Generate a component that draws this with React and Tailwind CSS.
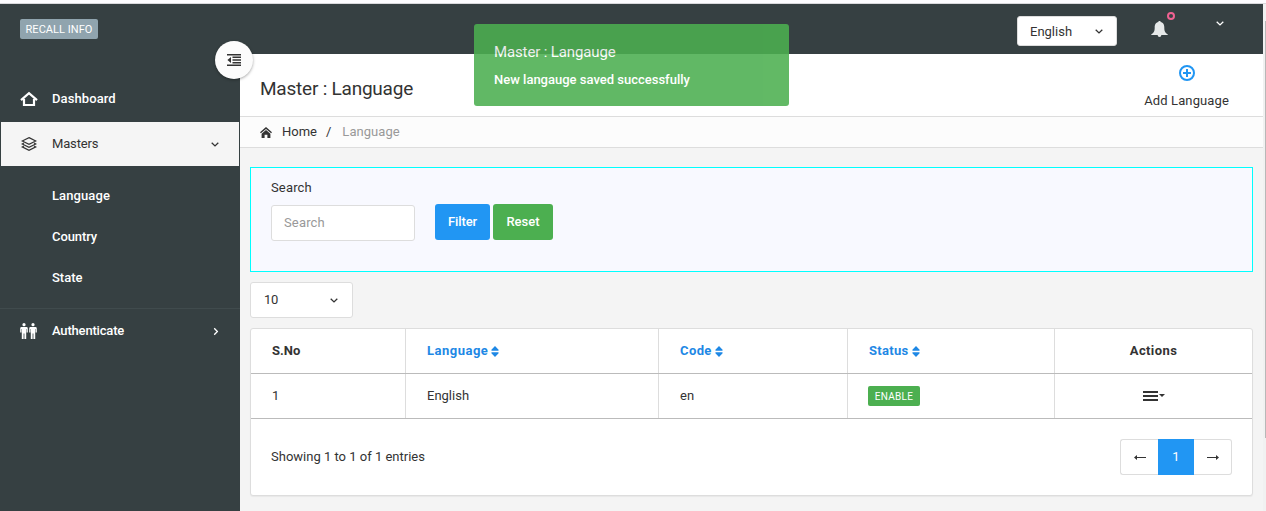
import React from "react";

const Chevron = ({ className = "" }) => (
  <svg className={className} width="8" height="5" viewBox="0 0 8 5" fill="none" stroke="currentColor" strokeWidth="1.3">
    <path d="M0.7 0.7L4 3.9L7.3 0.7" />
  </svg>
);

const HomeOutline = () => (
  <svg width="18" height="16" viewBox="0 0 18 16" fill="none" stroke="currentColor" strokeWidth="2.2">
    <path d="M1 9.2L9 2.2L17 9.2" />
    <path d="M4 8V14H14V8" />
  </svg>
);

const Layers = () => (
  <svg width="16" height="16" viewBox="0 0 16 16" fill="none" stroke="currentColor" strokeWidth="1.2">
    <path d="M8 1.6L14.8 5L8 8.4L1.2 5Z" />
    <path d="M3 7L1.2 8L8 11.4L14.8 8L13 7" />
    <path d="M3 9.9L1.2 10.9L8 14.3L14.8 10.9L13 9.9" />
  </svg>
);

const People = () => (
  <svg width="18" height="16" viewBox="0 0 18 16" fill="currentColor">
    {[0, 9].map((x) => (
      <g key={x} transform={`translate(${x} 0)`}>
        <circle cx="4" cy="1.7" r="1.6" />
        <path d="M1.6 4H6.4Q7.8 4 7.8 5.4V9.5H6.6V6H6.2V16H4.4V10.5H3.6V16H1.8V6H1.4V9.5H0.2V5.4Q0.2 4 1.6 4Z" />
      </g>
    ))}
  </svg>
);

const HomeSolid = () => (
  <svg width="12" height="11" viewBox="0 0 12 11" fill="currentColor">
    <path d="M6 0L12 5.3L11.1 6.3L6 1.9L0.9 6.3L0 5.3Z" />
    <path d="M6 3L10.4 6.8V11H7.4V7.8H4.6V11H1.6V6.8Z" />
  </svg>
);

const Outdent = () => (
  <svg width="14" height="12" viewBox="0 0 14 12" fill="currentColor">
    <path d="M0 0H14V1.4H0ZM5.5 2.6H14V4H5.5ZM5.5 5.3H14V6.7H5.5ZM5.5 8H14V9.4H5.5ZM0 10.6H14V12H0ZM4 3V9L0.4 6Z" />
  </svg>
);

const Bell = () => (
  <svg width="17" height="16" viewBox="0 0 17 16" fill="currentColor">
    <path d="M7.5 1V0H9.5V1C12.5 1.6 13.3 4 13.3 6.4C13.3 10.4 14.2 11.6 16.8 13.4V14H10.4Q10.2 16 8.5 16Q6.8 16 6.6 14H0.2V13.4C2.8 11.6 3.7 10.4 3.7 6.4C3.7 4 4.5 1.6 7.5 1Z" />
  </svg>
);

const PlusCircle = () => (
  <svg width="16" height="16" viewBox="0 0 16 16" fill="none" stroke="currentColor" strokeWidth="2">
    <circle cx="8" cy="8" r="7" />
    <path d="M8 4V12M4 8H12" />
  </svg>
);

const Sort = () => (
  <svg width="8" height="11" viewBox="0 0 8 11" fill="currentColor">
    <path d="M4 0L7.6 3.7Q8 4.8 7 4.8H1Q0 4.8 0.4 3.7ZM4 11L7.6 7.3Q8 6.2 7 6.2H1Q0 6.2 0.4 7.3Z" />
  </svg>
);

const Arrow = ({ flip = false }) => (
  <svg className={flip ? "rotate-180" : ""} width="12" height="5" viewBox="0 0 12 5" fill="currentColor">
    <path d="M0 2.5L3 0V2H12V3H3V5Z" />
  </svg>
);

function Sidebar() {
  return (
    <aside className="flex w-60 shrink-0 flex-col bg-[#364042] font-medium text-white">
      <div className="flex h-[72px] items-start pl-5 pt-[15px]">
        <span className="flex h-5 w-[78px] items-center justify-center rounded-[2px] bg-[#90a4ae] pt-px text-[11px] font-normal tracking-[0.05px]">
          RECALL INFO
        </span>
      </div>
      <nav className="flex flex-col">
        <a className="flex h-[46px] items-center pl-5">
          <HomeOutline />
          <span className="ml-3.5 tracking-[0.1px]">Dashboard</span>
        </a>
        <a className="mx-px flex h-11 items-center bg-[#f5f5f5] pl-5 pr-5 font-normal text-[#333]">
          <Layers />
          <span className="ml-[15px] flex-1 tracking-[-0.15px]">Masters</span>
          <Chevron />
        </a>
        <div className="flex flex-col pb-[12px] pl-[52px] pt-[9px]">
          <a className="flex h-[41px] items-center tracking-[0.1px]">Language</a>
          <a className="flex h-[41px] items-center tracking-[-0.1px]">Country</a>
          <a className="flex h-[41px] items-center">State</a>
        </div>
        <div className="mt-[-2px] h-px bg-[#404b4d]" />
        <a className="flex h-[44px] items-center pl-5 pr-5">
          <People />
          <span className="ml-3.5 flex-1 tracking-[-0.18px]">Authenticate</span>
          <Chevron className="-rotate-90" />
        </a>
      </nav>
    </aside>
  );
}

const columns = "grid grid-cols-[154px_253px_189px_207px_1fr]";
const cell = "flex items-center border-l border-[#ddd] pl-[21px]";

function LanguageTable() {
  return (
    <section className="mt-2.5 flex h-[168px] flex-col rounded-[3px] border border-[#ddd] bg-white shadow-[0_1px_1px_rgba(0,0,0,0.05)]">
      <div className={columns + " h-[45px] border-b border-[#bbb] font-bold"}>
        <div className="flex items-center pl-[21px]">S.No</div>
        <div className={cell + " gap-[3px] text-[#1e88e5]"}>
          <span className="tracking-[0.5px]">Language</span>
          <Sort />
        </div>
        <div className={cell + " gap-[3px] text-[#1e88e5]"}>
          <span className="tracking-[0.4px]">Code</span>
          <Sort />
        </div>
        <div className={cell + " gap-[3px] text-[#1e88e5]"}>
          <span className="tracking-[0.3px]">Status</span>
          <Sort />
        </div>
        <div className="flex items-center justify-center border-l border-[#ddd] tracking-[0.4px]">Actions</div>
      </div>
      <div className={columns + " h-[45px] border-b border-[#bbb]"}>
        <div className="flex items-center pl-[21px]">1</div>
        <div className={cell}>English</div>
        <div className={cell}>en</div>
        <div className="flex items-center border-l border-[#ddd] pl-5">
          <span className="flex h-5 w-[52px] items-center justify-center rounded-[2px] bg-[#4caf50] pt-px text-[10px] tracking-[0.3px] text-white">
            ENABLE
          </span>
        </div>
        <div className="flex items-center justify-center gap-px border-l border-[#ddd] pb-px">
          <svg width="15" height="10" viewBox="0 0 15 10" fill="currentColor">
            <path d="M0 0H15V2H0ZM0 4H15V6H0ZM0 8H15V10H0Z" />
          </svg>
          <svg width="6" height="3" viewBox="0 0 6 3" fill="currentColor">
            <path d="M0 0H6L3 3Z" />
          </svg>
        </div>
      </div>
      <div className="flex flex-1 items-center justify-between px-5">
        <span>Showing 1 to 1 of 1 entries</span>
        <div className="flex h-9">
          <a className="flex w-[38px] items-center justify-center rounded-l-[3px] border border-r-0 border-[#ddd] pt-px">
            <Arrow />
          </a>
          <a className="flex w-9 items-center justify-center bg-[#2196f3] text-white">1</a>
          <a className="flex w-[38px] items-center justify-center rounded-r-[3px] border border-l-0 border-[#ddd] pt-px">
            <Arrow flip />
          </a>
        </div>
      </div>
    </section>
  );
}

export default function App() {
  return (
    <div className="relative flex h-[511px] w-[1266px] flex-col overflow-hidden bg-[#f4f4f4] font-[Roboto,sans-serif] text-[13px] leading-5 text-[#333]">
      <div className="h-1 shrink-0 border-b border-[#d9d9dc] bg-[#fdfcff]" />
      <div className="flex min-h-0 flex-1">
        <Sidebar />
        <main className="flex w-[1023px] flex-col">
          <header className="flex h-[50px] shrink-0 bg-[#364042] pl-[777px]">
            <div className="mt-3 flex h-[30px] w-[100px] items-center justify-between rounded-[3px] border border-[#ddd] bg-white px-3 pt-px">
              English
              <Chevron className="mr-px" />
            </div>
            <div className="relative ml-[34px] mt-[17px] h-4 w-[17px] text-[#e6e9e9]">
              <Bell />
              <span className="absolute -top-[9px] left-4 h-2 w-2 rounded-full border-2 border-[#f06292]" />
            </div>
            <Chevron className="ml-12 mt-[17px] text-white" />
          </header>
          <div className="flex h-[63px] shrink-0 justify-between border-b border-[#ddd] bg-white pl-5 pr-[34px]">
            <h1 className="mt-[23px] text-[19px] leading-6 tracking-[-0.22px]">Master : Language</h1>
            <a className="mt-[11px] flex flex-col items-center">
              <span className="text-[#2196f3]">
                <PlusCircle />
              </span>
              <span className="mt-[10px] tracking-[0.12px]">Add Language</span>
            </a>
          </div>
          <div className="flex h-[31px] shrink-0 items-center border-b border-[#ddd] bg-[#fcfcfc] pl-5">
            <HomeSolid />
            <span className="ml-2.5">Home</span>
            <span className="ml-[9px]">/</span>
            <span className="ml-[11px] text-[#999] tracking-[0.05px]">Language</span>
          </div>
          <div className="flex flex-col pl-2.5 pr-2.5 pt-[19px]">
            <section className="h-[105px] border border-[#00ffff] bg-[#f8f9ff] pl-5 pt-2.5">
              <div className="tracking-[0.15px]">Search</div>
              <div className="mt-[6px] flex">
                <div className="mt-px flex h-9 w-36 items-center rounded-[3px] border border-[#ddd] bg-white pl-3 text-[#999] tracking-[0.15px]">
                  Search
                </div>
                <button className="ml-5 h-9 w-[55px] rounded-[3px] bg-[#2196f3] font-medium tracking-[-0.1px] text-white">Filter</button>
                <button className="ml-[3px] h-9 w-[60px] rounded-[3px] bg-[#4caf50] font-medium text-white">Reset</button>
              </div>
            </section>
            <div className="mt-2.5 flex h-9 w-[103px] items-center justify-between rounded-[3px] border border-[#ddd] bg-white pl-[13px] pr-3.5 tracking-[-0.4px]">
              10
              <Chevron />
            </div>
            <LanguageTable />
          </div>
        </main>
        <div className="flex w-[3px] justify-end bg-[#f1f1f1]">
          <div className="mt-[17px] h-[417px] w-px bg-[#b8b8b8]" />
        </div>
      </div>
      <button className="absolute left-[215px] top-[41px] flex h-[38px] w-[38px] items-center justify-center rounded-full bg-[#fcfcfc] shadow-[0_1px_3px_rgba(0,0,0,0.35)]">
        <Outdent />
      </button>
      <div className="absolute left-[474px] top-6 h-[82px] w-[315px] rounded-[3px] bg-[#4caf50] pl-5 pt-[18px] text-white opacity-[0.88]">
        <div className="text-[15px] tracking-[-0.13px]">Master : Langauge</div>
        <div className="mt-2 font-medium">New langauge saved successfully</div>
      </div>
    </div>
  );
}
